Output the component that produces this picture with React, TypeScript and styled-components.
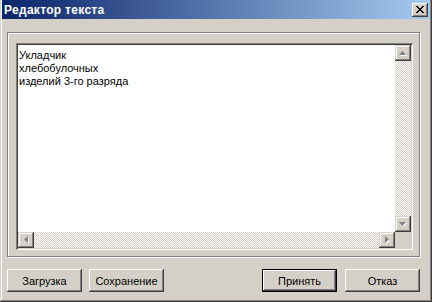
import React from 'react';
import styled, { createGlobalStyle } from 'styled-components';

const GlobalStyle = createGlobalStyle`
  html, body {
    margin: 0;
    padding: 0;
    background: #d4d0c8;
  }
  * {
    box-sizing: border-box;
  }
`;

const Window = styled.div`
  width: 432px;
  height: 302px;
  display: flex;
  flex-direction: column;
  background: #d4d0c8;
  padding: 0 2px 2px 2px;
  box-shadow: inset -1px -1px #404040, inset 1px 0 #d4d0c8, inset -2px -2px #808080, inset 2px 0 #ffffff;
  font-family: 'Liberation Sans', Arial, sans-serif;
  font-size: 11px;
  color: #000;
`;

const TitleBar = styled.div`
  height: 19px;
  display: flex;
  align-items: center;
  justify-content: space-between;
  padding: 0 2px 0 2px;
  background: linear-gradient(to right, #0a246a, #a6caf0);
`;

const Title = styled.span`
  color: #fff;
  font-weight: bold;
  font-size: 12px;
  font-family: 'Liberation Sans', Arial, sans-serif;
  letter-spacing: 0.3px;
`;

const CloseButton = styled.div`
  width: 16px;
  height: 14px;
  display: flex;
  align-items: center;
  justify-content: center;
  background: #d4d0c8;
  box-shadow: inset -1px -1px #404040, inset 1px 1px #ffffff, inset -2px -2px #808080;
`;

const Body = styled.div`
  flex: 1;
  display: flex;
  flex-direction: column;
  padding: 13px 10px 8px 5px;
`;

const Panel = styled.div`
  height: 225px;
  padding: 10px 6px 6px 8px;
  border: 1px solid #808080;
  box-shadow: inset 1px 1px #ffffff, 1px 1px #ffffff;
  display: flex;
`;

const Editor = styled.div`
  flex: 1;
  padding: 2px;
  background: #d4d0c8;
  box-shadow: inset 1px 1px #808080, inset -1px -1px #ffffff, inset 2px 2px #404040, inset -2px -2px #d4d0c8;
  display: grid;
  grid-template-columns: 1fr 16px;
  grid-template-rows: 1fr 16px;
`;

const Content = styled.div`
  background: #fff;
  padding: 4px 1px;
  line-height: 13px;
  white-space: pre-line;
`;

const ScrollBar = styled.div<{ $vertical?: boolean }>`
  display: flex;
  flex-direction: ${(p) => (p.$vertical ? 'column' : 'row')};
`;

const Track = styled.div`
  flex: 1;
  background: repeating-conic-gradient(#d4d0c8 0% 25%, #ffffff 0% 50%) 0 0 / 2px 2px;
`;

const ArrowButton = styled.div`
  width: 16px;
  height: 16px;
  flex: none;
  display: flex;
  align-items: center;
  justify-content: center;
  background: #d4d0c8;
  box-shadow: inset -1px -1px #404040, inset 1px 1px #d4d0c8, inset -2px -2px #808080, inset 2px 2px #ffffff;
`;

const Corner = styled.div`
  background: #d4d0c8;
`;

const ButtonRow = styled.div`
  margin-top: 12px;
  display: flex;
  justify-content: space-between;
`;

const ButtonGroup = styled.div<{ $gap: number }>`
  display: flex;
  gap: ${(p) => p.$gap}px;
`;

const Button = styled.div<{ $default?: boolean }>`
  width: 75px;
  height: 23px;
  display: flex;
  align-items: center;
  justify-content: center;
  background: #d4d0c8;
  box-shadow: ${(p) =>
    p.$default
      ? 'inset 1px 1px #000, inset -1px -1px #000, inset -2px -2px #404040, inset 2px 2px #ffffff, inset -3px -3px #808080'
      : 'inset -1px -1px #404040, inset 1px 1px #ffffff, inset -2px -2px #808080'};
`;

type Dir = 'up' | 'down' | 'left' | 'right';

const arrowPoints: Record<Dir, string> = {
  up: '3.5,0 7,4 0,4',
  down: '0,0 7,0 3.5,4',
  left: '4,0 4,7 0,3.5',
  right: '0,0 0,7 4,3.5',
};

const Arrow: React.FC<{ dir: Dir }> = ({ dir }) => {
  const vert = dir === 'up' || dir === 'down';
  const w = vert ? 8 : 5;
  const h = vert ? 5 : 8;
  return (
    <svg width={w} height={h} viewBox={`0 0 ${w} ${h}`}>
      <polygon points={arrowPoints[dir]} fill="#ffffff" transform="translate(1,1)" />
      <polygon points={arrowPoints[dir]} fill="#808080" />
    </svg>
  );
};

const CloseIcon = () => (
  <svg width="8" height="7" viewBox="0 0 8 7" shapeRendering="crispEdges">
    <path d="M0 0h2v1h-2zM6 0h2v1h-2zM1 1h2v1h-2zM5 1h2v1h-2zM2 2h4v1h-4zM3 3h2v1h-2zM2 4h4v1h-4zM1 5h2v1h-2zM5 5h2v1h-2zM0 6h2v1h-2zM6 6h2v1h-2z" fill="#000" />
  </svg>
);

const TEXT = 'Укладчик\nхлебобулочных\nизделий 3-го разряда';

const App: React.FC = () => {
  return (
    <>
      <GlobalStyle />
      <Window>
        <TitleBar>
          <Title>Редактор текста</Title>
          <CloseButton>
            <CloseIcon />
          </CloseButton>
        </TitleBar>
        <Body>
          <Panel>
            <Editor>
              <Content>{TEXT}</Content>
              <ScrollBar $vertical>
                <ArrowButton>
                  <Arrow dir="up" />
                </ArrowButton>
                <Track />
                <ArrowButton>
                  <Arrow dir="down" />
                </ArrowButton>
              </ScrollBar>
              <ScrollBar>
                <ArrowButton>
                  <Arrow dir="left" />
                </ArrowButton>
                <Track />
                <ArrowButton>
                  <Arrow dir="right" />
                </ArrowButton>
              </ScrollBar>
              <Corner />
            </Editor>
          </Panel>
          <ButtonRow>
            <ButtonGroup $gap={7}>
              <Button>Загрузка</Button>
              <Button>Сохранение</Button>
            </ButtonGroup>
            <ButtonGroup $gap={8}>
              <Button $default>Принять</Button>
              <Button>Отказ</Button>
            </ButtonGroup>
          </ButtonRow>
        </Body>
      </Window>
    </>
  );
};

export default App;
